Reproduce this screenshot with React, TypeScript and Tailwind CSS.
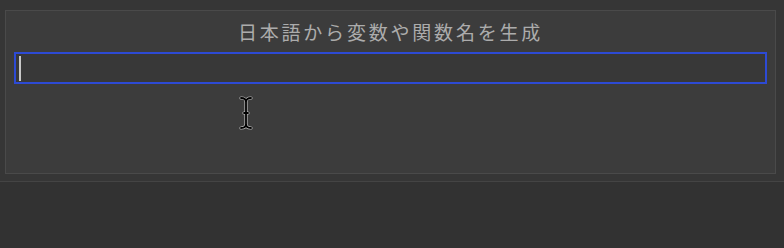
import React from "react";

const TITLE = "日本語から変数や関数名を生成";

function IBeamCursor() {
  return (
    <svg
      width="14"
      height="34"
      viewBox="0 0 14 34"
      className="pointer-events-none absolute left-[239px] top-[96px]"
    >
      <path
        d="M2 2 C5 2 7 3 7 6 C7 3 9 2 12 2 M7 6 L7 28 C7 31 5 32 2 32 M7 28 C7 31 9 32 12 32 M5 17 L9 17"
        fill="none"
        stroke="#bdbdbd"
        strokeWidth="3.2"
        strokeLinecap="round"
      />
      <path
        d="M2 2 C5 2 7 3 7 6 C7 3 9 2 12 2 M7 6 L7 28 C7 31 5 32 2 32 M7 28 C7 31 9 32 12 32 M5 17 L9 17"
        fill="none"
        stroke="#000"
        strokeWidth="1.8"
        strokeLinecap="round"
      />
    </svg>
  );
}

export default function App() {
  return (
    <div
      className="relative flex h-[248px] w-[784px] flex-col bg-[#323232]"
      style={{ fontFamily: '"Noto Sans CJK JP", "Noto Sans", sans-serif' }}
    >
      <div className="border-b border-[#444444] bg-[#363636] px-[5px] pb-[7px] pt-[10px] pr-[8px]">
        <div className="flex h-[164px] flex-col border border-[#4a4a4a] bg-[#3c3c3c] px-[8px] pt-[7px]">
          <h1 className="text-center text-[19px] leading-[27px] tracking-[2.8px] text-[#acacac]">
            {TITLE}
          </h1>
          <div className="mt-[7px] flex h-[32px] items-center border-2 border-[#2d4ad4] bg-[#383838] pl-[3px]">
            <span className="h-[25px] w-[2px] bg-[#c8c8c8]" />
          </div>
        </div>
      </div>
      <IBeamCursor />
    </div>
  );
}
